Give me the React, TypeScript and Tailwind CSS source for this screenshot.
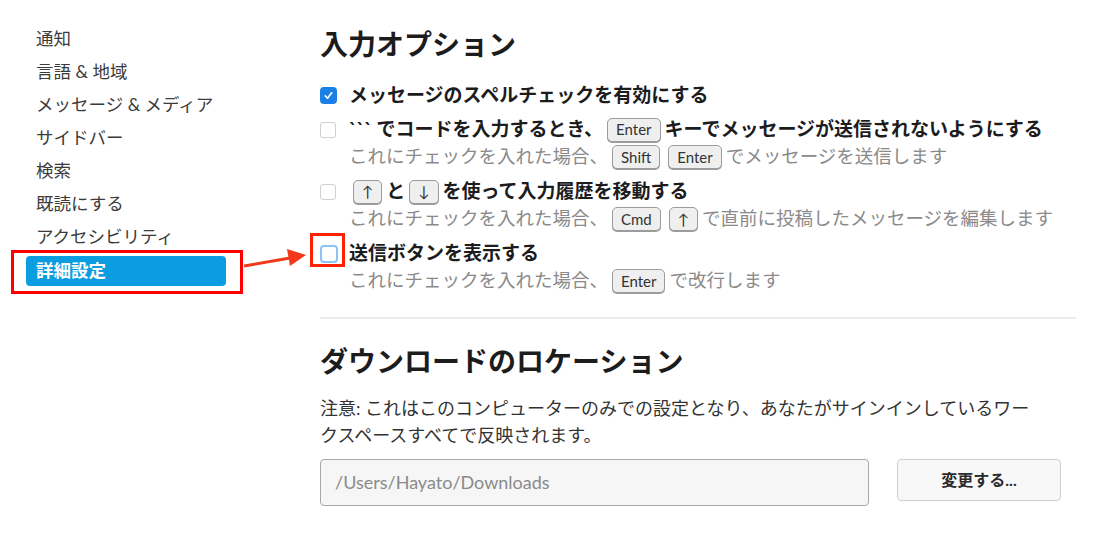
import React from "react";

const font = { fontFamily: "Lato, 'Noto Sans CJK JP', sans-serif" };

const Key = ({ children }: { children: React.ReactNode }) => (
  <span className="inline-flex items-center h-[24px] px-[8px] mx-[4px] rounded-[5px] border border-[#9c9c9c] bg-[#efefef] text-[15px] leading-none text-[#333] font-normal shadow-[0_1px_0_#9c9c9c] align-middle">
    {children}
  </span>
);

const Check = ({ checked, focus }: { checked?: boolean; focus?: boolean }) => {
  if (checked)
    return (
      <span className="w-[17px] h-[17px] rounded-[4px] bg-[#1b7fe6] flex items-center justify-center shrink-0">
        <svg width="11" height="11" viewBox="0 0 12 12">
          <path d="M2.5 6.5 L5 9 L9.5 3" fill="none" stroke="white" strokeWidth="1.8" strokeLinecap="round" strokeLinejoin="round" />
        </svg>
      </span>
    );
  if (focus)
    return <span className="w-[18px] h-[18px] rounded-[4px] border-2 border-[#8cc3f7] bg-white shrink-0" />;
  return <span className="w-[16px] h-[16px] rounded-[3px] border border-[#cfcfcf] bg-white shrink-0" />;
};

const Option = ({
  checked,
  focus,
  title,
  sub,
}: {
  checked?: boolean;
  focus?: boolean;
  title: React.ReactNode;
  sub?: React.ReactNode;
}) => (
  <div className="flex flex-col">
    <div className="flex items-center h-[27px]">
      <div className="w-[29px] flex items-center">
        <Check checked={checked} focus={focus} />
      </div>
      <div className="text-[19px] font-bold text-[#1d1c1d] flex items-center whitespace-nowrap">{title}</div>
    </div>
    {sub && (
      <div className="pl-[29px] h-[28px] flex items-center text-[18.5px] text-[#8a8a8a] whitespace-nowrap">{sub}</div>
    )}
  </div>
);

const menu = ["通知", "言語 & 地域", "メッセージ & メディア", "サイドバー", "検索", "既読にする", "アクセシビリティ"];

export default function App() {
  return (
    <div className="relative w-[1093px] h-[534px] bg-white overflow-hidden flex" style={font}>
      <aside className="w-[320px] shrink-0 pt-[23px] pl-[26px]">
        {menu.map((m) => (
          <div key={m} className="h-[33px] pl-[10px] flex items-center text-[17.5px] text-[#3b3b3b]">
            {m}
          </div>
        ))}
        <div className="w-[200px] h-[30px] mt-[2px] rounded-[4px] bg-[#0c9de0] pl-[10px] flex items-center text-[17.5px] font-bold text-white">
          詳細設定
        </div>
      </aside>

      <main className="flex-1 pr-[17px] pt-[26px]">
        <h2 className="text-[28px] font-bold leading-[36px] text-[#1d1c1d]">入力オプション</h2>
        <div className="mt-[20px] flex flex-col gap-[7px]">
          <Option checked title="メッセージのスペルチェックを有効にする" />
          <Option
            title={
              <>
                ``` でコードを入力するとき、<Key>Enter</Key>キーでメッセージが送信されないようにする
              </>
            }
            sub={
              <>
                これにチェックを入れた場合、<Key>Shift</Key>
                <Key>Enter</Key>でメッセージを送信します
              </>
            }
          />
          <Option
            title={
              <>
                <Key>↑</Key>と<Key>↓</Key>を使って入力履歴を移動する
              </>
            }
            sub={
              <>
                これにチェックを入れた場合、<Key>Cmd</Key>
                <Key>↑</Key>で直前に投稿したメッセージを編集します
              </>
            }
          />
          <Option
            focus
            title="送信ボタンを表示する"
            sub={
              <>
                これにチェックを入れた場合、<Key>Enter</Key>で改行します
              </>
            }
          />
        </div>

        <div className="mt-[22px] border-t-2 border-[#ebebeb]" />

        <h2 className="mt-[24px] text-[28px] font-bold leading-[36px] text-[#1d1c1d]">ダウンロードのロケーション</h2>
        <p className="mt-[16px] text-[18px] leading-[27px] text-[#333] pr-[34px]">
          注意: これはこのコンピューターのみでの設定となり、あなたがサインインしているワークスペースすべてで反映されます。
        </p>
        <div className="mt-[10px] flex items-start gap-[28px]">
          <div className="w-[549px] h-[47px] rounded-[4px] border border-[#a9a9a9] bg-[#f6f6f6] pl-[14px] flex items-center text-[18px] text-[#8a8a8a]">
            /Users/Hayato/Downloads
          </div>
          <button className="w-[164px] h-[42px] rounded-[4px] border border-[#cfcfcf] bg-[#f8f8f8] text-[16px] font-bold text-[#2b2b2b]">
            変更する...
          </button>
        </div>
      </main>

      {/* annotations */}
      <div className="absolute left-[11px] top-[250px] w-[232px] h-[44px] border-[3px] border-[#ff0000]" />
      <div className="absolute left-[310px] top-[233px] w-[35px] h-[34px] border-[3px] border-[#ff2200]" />
      <svg className="absolute left-[240px] top-[244px]" width="70" height="30" viewBox="0 0 70 30">
        <line x1="4" y1="22" x2="50" y2="14" stroke="#f2391c" strokeWidth="3" />
        <polygon points="66,11 47,5 50,22" fill="#f2391c" />
      </svg>
    </div>
  );
}
